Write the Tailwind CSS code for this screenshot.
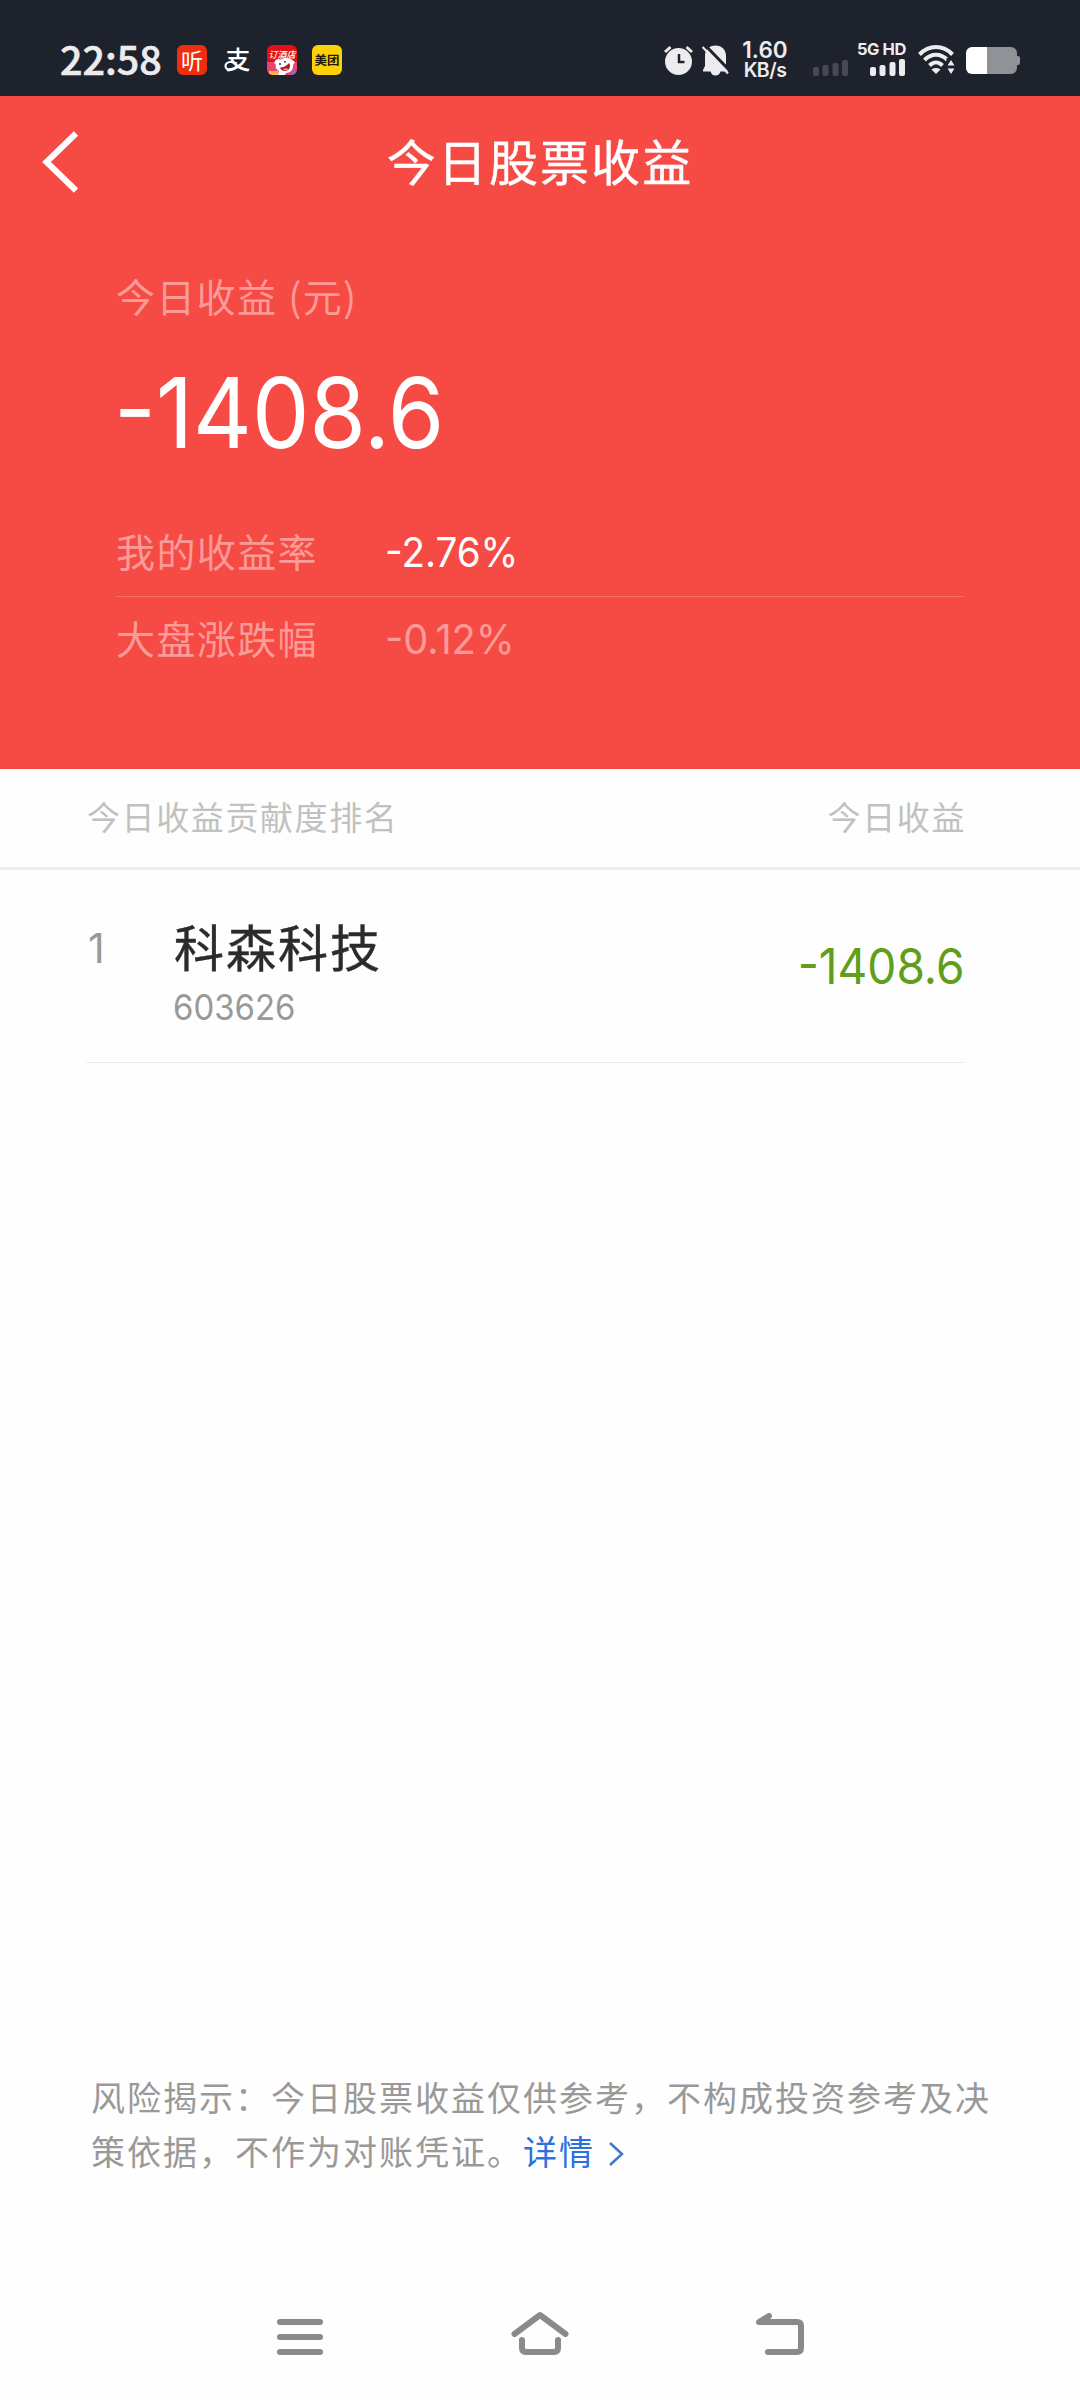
<!DOCTYPE html>
<html lang="zh-CN">
<head>
    <meta charset="UTF-8">
    <meta name="viewport" content="width=device-width, initial-scale=1.0">
    <title>今日股票收益</title>
    <script src="https://cdn.jsdelivr.net/npm/@tailwindcss/browser@4"></script>
</head>
<body class="bg-white">
    <div class="w-[1080px] h-[2400px] flex flex-col overflow-hidden bg-[#fefefe] font-['Noto_Sans_CJK_SC',sans-serif]">

        <!-- Статус-бар -->
        <div class="h-24 shrink-0 flex items-center bg-[#1e222c] pl-[60px] pt-6 text-[#ececee]">
            <div class="w-[117px] text-[39.5px] leading-[40px] font-medium pb-1 [-webkit-text-stroke:0.6px]">22:58</div>
            <div class="flex gap-[15px]">
                <div class="size-[30px] rounded-[6px] bg-[#ee2f0e] flex items-center justify-center text-[22px] leading-none font-normal text-white">
                    <span class="pb-0.5">听</span>
                </div>
                <svg class="size-[30px] overflow-visible" viewBox="0 0 30 30">
                    <text x="3.500" y="24" font-size="25" font-weight="500" fill="#fff">支</text>
                    <path d="M15 18.500C9 15.500 3.500 17 3.500 21C3.500 25.500 11 26 15.500 21" fill="none" stroke="#fff" stroke-width="2"/>
                </svg>
                <svg class="size-[30px]" viewBox="0 0 30 30">
                    <defs>
                        <clipPath id="tile"><rect width="30" height="30" rx="6"/></clipPath>
                    </defs>
                    <g clip-path="url(#tile)">
                        <rect width="30" height="30" fill="#e60f14"/>
                        <path d="M0 17H30V30H0z" fill="#e8456f"/>
                        <path d="M8 16C10 13.500 12 14.500 14 14.500C17 12.500 21 12.500 24 14L28 17L26 20C26.500 25 23 28 19 28L18 30H11L12 26C8 24 8.500 21 9 19.500C7 19 7 17 8 16z" fill="#fff"/>
                        <path d="M13 22.500C17 22.500 20 20.500 22 18C24.500 21.500 22 26 18 26C15.500 26 13.500 24.500 13 22.500z" fill="#b3122b"/>
                        <path d="M16 24.500C18 22.500 20.500 23 21.500 24C20 26 17.500 26 16 24.500z" fill="#ff8a94"/>
                        <circle cx="13" cy="19" r="0.900" fill="#222"/>
                        <circle cx="18" cy="16.800" r="0.900" fill="#222"/>
                        <path d="M2 26H11V30H2z" fill="#f8b632"/>
                        <path d="M24 30L27 25L30 27V30z" fill="#6e7be0"/>
                        <text x="1.500" y="12.500" font-size="9" font-weight="500" font-style="italic" fill="#fff">订酒店</text>
                    </g>
                </svg>
                <div class="size-[30px] rounded-[6px] bg-[#fdd106] flex items-center justify-center text-[12.5px] leading-none font-bold text-[#1d1808]">美团</div>
            </div>

            <svg class="ml-[322px] w-[29px] h-[30px]" viewBox="0 0 29 30" fill="none">
                <circle cx="14.500" cy="16.500" r="13.500" fill="#ececee"/>
                <path d="M1 7L6.500 2M28 7L22.500 2" stroke="#ececee" stroke-width="3"/>
                <path d="M15 9V17H20.500" stroke="#1e222c" stroke-width="2.500"/>
            </svg>
            <svg class="ml-[9px] w-[27px] h-[31px]" viewBox="0 0 27 31">
                <path d="M13.500 0.500C20 0.500 24 5 24 11V21L26 25V26.500H1V25L3 21V11C3 5 7 0.500 13.500 0.500z" fill="#ececee"/>
                <path d="M8.500 26H18.500C18 29 16 30.500 13.500 30.500C11 30.500 9 29 8.500 26z" fill="#ececee"/>
                <path d="M2 -1L28 26" stroke="#1e222c" stroke-width="3"/>
                <path d="M0.500 2L26 28.500" stroke="#ececee" stroke-width="2.200"/>
            </svg>
            <div class="ml-[12px] w-[48px] font-['Inter'] font-semibold text-[22.5px] leading-[20px] text-center">
                <div>1.60</div>
                <div class="text-[19.5px] leading-[20px] tracking-tight">KB/s</div>
            </div>
            <svg class="ml-[24px] w-[36px] h-[34px]" viewBox="0 0 36 34" fill="#474a53">
                <rect x="0" y="24" width="6" height="9" rx="2"/>
                <rect x="9.500" y="22" width="6" height="11" rx="2"/>
                <rect x="19.500" y="20" width="6" height="13" rx="2"/>
                <rect x="29" y="17" width="6" height="16" rx="2"/>
            </svg>
            <div class="ml-[8px] w-[49px] h-[36px] flex flex-col items-end justify-between pb-0.5">
                <div class="font-['Inter'] font-bold text-[16.5px] leading-[14px] whitespace-nowrap tracking-tight">5G HD</div>
                <svg class="w-[36px] h-[17px]" viewBox="0 0 36 17" fill="#ececee">
                    <rect x="0" y="8" width="6" height="9" rx="2"/>
                    <rect x="9.500" y="6" width="6" height="11" rx="2"/>
                    <rect x="19.500" y="3" width="6" height="14" rx="2"/>
                    <rect x="29" y="0" width="6" height="17" rx="2"/>
                </svg>
            </div>
            <svg class="ml-[12px] w-[38px] h-[30px]" viewBox="0 0 38 30" fill="none" stroke="#ececee" stroke-width="4">
                <path d="M1.500 9.500C11 -0.500 25 -0.500 34.500 9.500"/>
                <path d="M6.500 15C13.500 8 22.500 8 29.500 15"/>
                <path d="M11.500 20.500C15.500 16.500 20.500 16.500 24.500 20.500"/>
                <path d="M13.500 24.500C16 22.500 20 22.500 22.500 24.500L18 29z" fill="#ececee" stroke="none"/>
                <path d="M28.500 13H38V30H28.500z" fill="#1e222c" stroke="none"/>
                <path d="M29.500 20.500L33 15L36.500 20.500zM29.500 23.500H36.500L33 29z" fill="#ececee" stroke="none"/>
            </svg>
            <svg class="ml-[10px] w-[54px] h-[27px]" viewBox="0 0 54 27">
                <path d="M21 0H45A6 6 0 0 1 51 6V9H52A2 2 0 0 1 54 11V16A2 2 0 0 1 52 18H51V21A6 6 0 0 1 45 27H21z" fill="#919297"/>
                <path d="M21 0H6A6 6 0 0 0 0 6V21A6 6 0 0 0 6 27H21z" fill="#fff"/>
            </svg>
        </div>

        <!-- Красная шапка с доходом -->
        <div class="h-[673px] shrink-0 bg-[#f64a44] text-white">
            <div class="relative h-[130px] flex items-center justify-center pb-[3px]">
                <svg class="absolute left-[40px] top-[34px] w-[40px] h-[64px]" viewBox="0 0 40 64" fill="none" stroke="#fff" stroke-width="6">
                    <path d="M36 3.500L6.500 32L36 60.500"/>
                </svg>
                <h1 class="text-[49px] leading-none tracking-[2.1px] [-webkit-text-stroke:0.4px]">今日股票收益</h1>
            </div>
            <div class="mt-[39px] mx-[116px]">
                <div class="h-[60px] flex items-center text-[39px] leading-none tracking-[1.3px] text-[#fb9b98]">今日收益<span class="ml-[11px]">(元)</span></div>
                <div class="mt-[27px] h-[120px] flex items-center font-['Inter'] text-[97px] leading-none">
                    <span class="-ml-[2px] origin-left scale-x-94">-1408.6</span>
                </div>
                <div class="mt-[37px] h-[88px] flex items-center border-b border-white/20">
                    <div class="w-[269px] pb-1 text-[39px] leading-none tracking-[1.4px] text-[#fb9b98]">我的收益率</div>
                    <div class="font-['Inter'] text-[41px] leading-none origin-left scale-x-94">-2.76%</div>
                </div>
                <div class="h-[84px] flex items-center text-[#fb9b98]">
                    <div class="w-[269px] pb-1 text-[39px] leading-none tracking-[1.4px]">大盘涨跌幅</div>
                    <div class="font-['Inter'] text-[41px] leading-none origin-left scale-x-97">-0.12%</div>
                </div>
            </div>
        </div>

        <!-- Заголовок списка -->
        <div class="h-[101px] shrink-0 flex items-center justify-between border-b-3 border-[#ededed] pl-[87px] pr-[114px] pb-[3px] text-[33px] leading-none tracking-[1.6px] text-[#c1c1c1]">
            <span>今日收益贡献度排名</span>
            <span>今日收益</span>
        </div>

        <!-- Список акций -->
        <div class="h-[193px] shrink-0 ml-[86px] mr-[115px] flex border-b border-[#ececec]">
            <div class="w-[88px] pl-0.5 pt-[58px] font-['Inter'] text-[41px] leading-[40px] text-[#999]">1</div>
            <div class="flex-1 pt-[42px]">
                <div class="text-[50px] leading-[66px] tracking-[2px] text-[#2b2b2b] [-webkit-text-stroke:0.4px]">科森科技</div>
                <div class="mt-[9px] -ml-px font-['Inter'] text-[35px] leading-[40px] text-[#999] origin-left scale-x-94">603626</div>
            </div>
            <div class="self-center font-['Inter'] text-[49px] leading-none text-[#5f9f1c] origin-right scale-x-94">-1408.6</div>
        </div>

        <!-- Предупреждение о рисках -->
        <div class="mt-auto ml-[91px] text-[34px] leading-[54px] tracking-[2px] text-[#999] whitespace-nowrap">
            风险揭示：今日股票收益仅供参考，不构成投资参考及决<br>
            策依据，不作为对账凭证。<a href="#" class="text-[#2b72dd]">详情<svg class="inline-block ml-[14px] w-[15px] h-[24px] align-[-1px]" viewBox="0 0 15 24" fill="none" stroke="#3f77cf" stroke-width="2.500"><path d="M1 1L13 12L1 23"/></svg></a>
        </div>

        <!-- Навигация -->
        <div class="mt-[89px] h-[133px] shrink-0 flex items-center justify-center gap-[180px]">
            <svg class="size-[60px]" viewBox="0 0 60 60" fill="none" stroke="#8a8a8a" stroke-width="6" stroke-linecap="round">
                <path d="M10 18H50M10 33H50M10 48H50"/>
            </svg>
            <svg class="size-[60px]" viewBox="0 0 60 60" fill="none" stroke="#8a8a8a" stroke-width="6" stroke-linecap="round" stroke-linejoin="round">
                <path d="M4.500 30L30 11L55.500 30"/>
                <path d="M12 36V44Q12 48 16 48H44Q48 48 48 44V36"/>
            </svg>
            <svg class="size-[60px]" viewBox="0 0 60 60" fill="none" stroke="#8a8a8a" stroke-width="6" stroke-linecap="round" stroke-linejoin="round">
                <path d="M18 48H47Q51 48 51 44V22Q51 18 47 18H9L19 12"/>
            </svg>
        </div>
    </div>
</body>
</html>
